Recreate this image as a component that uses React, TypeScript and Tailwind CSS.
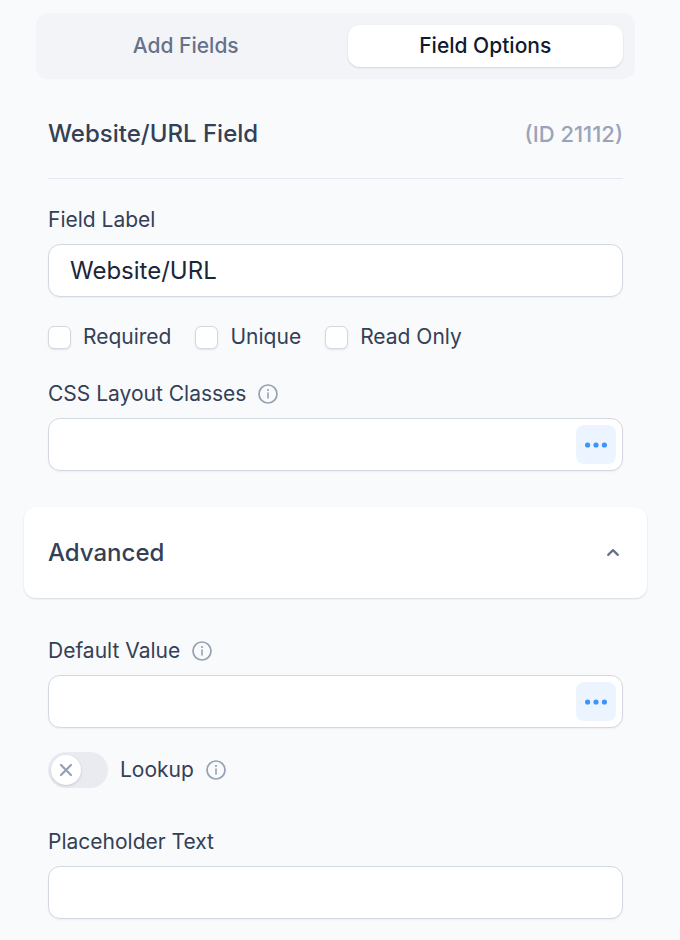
import { useState } from 'react'
import type { ReactNode } from 'react'

const InfoIcon = () => {
  return (
    <svg width="20" height="20" viewBox="0 0 20 20" fill="none" className="shrink-0 text-[#94a0b4]" aria-hidden="true">
      <circle cx="10" cy="10" r="9" stroke="currentColor" strokeWidth="1.7" />
      <path d="M10 9v5" stroke="currentColor" strokeWidth="1.6" strokeLinecap="round" />
      <circle cx="10" cy="6" r="1.1" fill="currentColor" />
    </svg>
  )
}

interface TextFieldProps {
  id: string
  label: string
  defaultValue?: string
  info?: boolean
  menu?: boolean
}

const TextField = ({ id, label, defaultValue = '', info, menu }: TextFieldProps) => {
  return (
    <div>
      <div className="mb-2 flex items-center gap-3">
        <label htmlFor={id} className="text-[21px] leading-8">{label}</label>
        {info && <InfoIcon />}
      </div>
      <div className="flex h-[53px] items-center rounded-xl border border-[#d3d8e2] bg-white pr-[6px] shadow-[0_1px_2px_rgba(16,24,40,0.05)]">
        <input
          id={id}
          type="text"
          defaultValue={defaultValue}
          className="h-full min-w-0 flex-1 rounded-xl bg-transparent px-[21px] text-[24px] text-[#1b2639] outline-none"
        />
        {menu && (
          <button
            type="button"
            aria-label={`${label} options`}
            className="flex h-[39px] w-10 shrink-0 cursor-pointer items-center justify-center rounded-lg bg-[#ecf5ff] text-[#3b94fb]"
          >
            <svg width="24" height="6" viewBox="0 0 24 6" fill="currentColor" aria-hidden="true">
              <circle cx="3.6" cy="3" r="2.6" />
              <circle cx="12" cy="3" r="2.6" />
              <circle cx="20.4" cy="3" r="2.6" />
            </svg>
          </button>
        )}
      </div>
    </div>
  )
}

const Checkbox = ({ children }: { children: ReactNode }) => {
  return (
    <label className="flex cursor-pointer items-center gap-3 text-[21px] leading-8">
      <input
        type="checkbox"
        className="size-[23px] shrink-0 appearance-none rounded-md border border-[#d3d8e2] bg-white shadow-[0_1px_2px_rgba(16,24,40,0.1)] checked:border-[#3b94fb] checked:bg-[#3b94fb]"
      />
      {children}
    </label>
  )
}

const Tabs = () => {
  return (
    <div role="tablist" className="flex gap-6 rounded-xl bg-[#f2f4f8] p-3 text-[21px] font-medium">
      <button type="button" role="tab" aria-selected="false" className="h-[42px] flex-1 cursor-pointer rounded-xl text-[#667289]">
        Add Fields
      </button>
      <button
        type="button"
        role="tab"
        aria-selected="true"
        className="h-[42px] flex-1 cursor-pointer rounded-xl bg-white text-[#101a2e] shadow-[0_1px_2px_rgba(16,24,40,0.14)]"
      >
        Field Options
      </button>
    </div>
  )
}

const App = () => {
  const [open, setOpen] = useState(true)

  return (
    <main className="min-h-screen bg-[#f9fafc] pt-[13px] pr-[33px] pb-[21px] pl-6 font-['Inter',sans-serif] text-[#344056]">
      <div className="px-3">
        <Tabs />
      </div>

      <section className="px-6 pt-[39px]">
        <header className="flex items-center justify-between border-b border-[#e3e7ef] pb-7">
          <h1 className="text-[24px] leading-8 font-medium">Website/URL Field</h1>
          <span className="text-[22px] leading-8 font-medium text-[#9aa4b8]">(ID 21112)</span>
        </header>
        <div className="pt-[25px]">
          <TextField id="field-label" label="Field Label" defaultValue="Website/URL" />
        </div>
        <div className="flex flex-wrap gap-x-6 pt-6 pb-[25px]">
          <Checkbox>Required</Checkbox>
          <Checkbox>Unique</Checkbox>
          <Checkbox>Read Only</Checkbox>
        </div>
        <TextField id="css-classes" label="CSS Layout Classes" info menu />
      </section>

      <h2 className="mt-9">
        <button
          type="button"
          aria-expanded={open}
          onClick={() => setOpen(!open)}
          className="flex h-[91px] w-full cursor-pointer items-center justify-between rounded-xl bg-white pr-[27px] pl-6 text-[24px] font-medium shadow-[0_1px_2px_rgba(16,24,40,0.14)]"
        >
          Advanced
          <svg width="14" height="10" viewBox="0 0 14 10" fill="none" className={open ? '' : 'rotate-180'} aria-hidden="true">
            <path d="M2.2 6.9 7 2.1l4.8 4.8" stroke="#667289" strokeWidth="2.2" strokeLinecap="round" strokeLinejoin="round" />
          </svg>
        </button>
      </h2>

      {open && (
        <section className="px-6 pt-[37px]">
          <TextField id="default-value" label="Default Value" info menu />
          <div className="flex items-center gap-3 pt-6 pb-[38px]">
            <label className="flex cursor-pointer items-center gap-3 text-[21px] leading-8">
              <input type="checkbox" role="switch" className="peer sr-only" />
              <span className="flex h-9 w-[60px] items-center rounded-full bg-[#eaebf1] px-[3px] peer-checked:justify-end peer-checked:bg-[#3b94fb]">
                <span className="flex size-[30px] items-center justify-center rounded-full bg-white shadow-[0_1px_3px_rgba(16,24,40,0.16)]">
                  <svg width="14" height="14" viewBox="0 0 14 14" fill="none" aria-hidden="true">
                    <path d="m2 2 10 10M12 2 2 12" stroke="#94a0b4" strokeWidth="2.2" strokeLinecap="round" />
                  </svg>
                </span>
              </span>
              Lookup
            </label>
            <InfoIcon />
          </div>
          <TextField id="placeholder-text" label="Placeholder Text" />
        </section>
      )}
    </main>
  )
}

export default App
